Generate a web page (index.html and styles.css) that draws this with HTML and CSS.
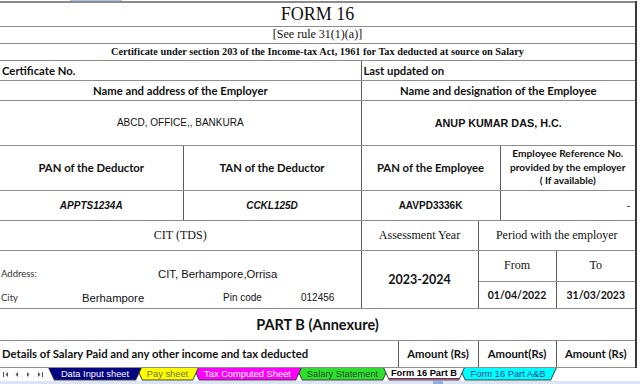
FILE: index.html
```html
<!DOCTYPE html>
<html lang="en">
<head>
    <meta charset="utf-8">
    <meta name="viewport" content="width=device-width, initial-scale=1">
    <link rel="stylesheet" href="styles.css">
</head>
<body>
    <!-- selection marker above the sheet -->
    <div class="sheet-top"><span class="sel"></span></div>

    <table class="form16">
        <colgroup>
            <col class="c1"><col class="c2"><col class="c3"><col class="c4"><col class="c5"><col class="c6"><col class="c7">
        </colgroup>
        <tr class="r-title"><td colspan="7" class="title">FORM 16</td></tr>
        <tr class="r-17"><td colspan="7" class="rule">[See rule 31(1)(a)]</td></tr>
        <tr class="r-17"><td colspan="7" class="cert">Certificate under section 203 of the Income-tax Act, 1961 for Tax deducted at source on Salary</td></tr>
        <tr class="r-20">
            <td colspan="2" class="hd left">Certificate No.</td>
            <td colspan="5" class="hd left">Last updated on</td>
        </tr>
        <tr class="r-20">
            <td colspan="2" class="hd">Name and address of the Employer</td>
            <td colspan="5" class="hd">Name and designation of the Employee</td>
        </tr>
        <tr class="r-45">
            <td colspan="2" class="val">ABCD, OFFICE,, BANKURA</td>
            <td colspan="5" class="val bold name">ANUP KUMAR DAS, H.C.</td>
        </tr>
        <tr class="r-45">
            <td class="hd">PAN of the Deductor</td>
            <td class="hd">TAN of the Deductor</td>
            <td colspan="3" class="hd">PAN of the Employee</td>
            <td colspan="2" class="hd small">Employee Reference No.<br>provided by the employer<br>( If available)</td>
        </tr>
        <tr class="r-30">
            <td class="val bi">APPTS1234A</td>
            <td class="val bi">CCKL125D</td>
            <td colspan="3" class="val bold">AAVPD3336K</td>
            <td colspan="2" class="val right">-</td>
        </tr>
        <tr class="r-30">
            <td colspan="2" class="serif">CIT (TDS)</td>
            <td colspan="2" class="serif">Assessment Year</td>
            <td colspan="3" class="serif">Period with the employer</td>
        </tr>
        <tr class="r-31">
            <td colspan="2" rowspan="2" class="addr">
                <div class="addr-grid">
                    <span class="lbl">Address:</span>
                    <span class="val cit">CIT, Berhampore,Orrisa</span>
                    <span class="lbl">City</span>
                    <span class="val town">Berhampore</span>
                    <span class="val">Pin code</span>
                    <span class="val">012456</span>
                </div>
            </td>
            <td colspan="2" rowspan="2" class="hd year">2023-2024</td>
            <td colspan="2" class="serif">From</td>
            <td class="serif">To</td>
        </tr>
        <tr class="r-27">
            <td colspan="2" class="hd date">01/04/2022</td>
            <td class="hd date">31/03/2023</td>
        </tr>
        <tr class="r-32"><td colspan="7" class="hd part">PART B (Annexure)</td></tr>
        <tr class="r-27">
            <td colspan="3" class="hd left">Details of Salary Paid and any other income and tax deducted</td>
            <td class="hd">Amount (Rs)</td>
            <td colspan="2" class="hd">Amount(Rs)</td>
            <td class="hd">Amount (Rs)</td>
        </tr>
    </table>

    <!-- sheet tabs -->
    <div class="tabbar">
        <svg class="nav" width="46" height="13" viewBox="0 0 46 13">
            <rect x="3" y="4" width="1" height="5" fill="#555"/>
            <polygon points="8,4 8,9 5.5,6.5" fill="#555"/>
            <polygon points="18,4 18,9 15.5,6.5" fill="#555"/>
            <polygon points="27,4 27,9 29.5,6.5" fill="#555"/>
            <polygon points="38,4 38,9 40.5,6.5" fill="#555"/>
            <rect x="42" y="4" width="1" height="5" fill="#555"/>
        </svg>
        <div class="tabs">
            <span class="tab t-data"><span>Data Input sheet</span></span>
            <span class="tab t-pay"><span>Pay sheet</span></span>
            <span class="tab t-tax"><span>Tax Computed Sheet</span></span>
            <span class="tab t-sal"><span>Salary Statement</span></span>
            <span class="tab t-partb active"><span>Form 16 Part B</span></span>
            <span class="tab t-ab"><span>Form 16 Part A&amp;B</span></span>
        </div>
    </div>
    <div class="hscroll"><span class="thumb"></span></div>
</body>
</html>
```

FILE: styles.css
```css
body {
    margin: 0;
    width: 640px;
    height: 384px;
    overflow: hidden;
    background: #fff;
    color: #111;
    font-family: Lato, "Liberation Sans", sans-serif;
}

.sheet-top {
    height: 1px;
    display: flex;
}
    .sheet-top .sel {
        margin-left: 70px;
        width: 52px;
        height: 1px;
        background: #a9c1ef;
    }

/* the form sheet */
.form16 {
    width: 636px;
    border-collapse: collapse;
    table-layout: fixed;
    border-top: 2px solid #8c8c8c;
    border-left: hidden;
    border-right: 2px solid #3a3a3a;
}

.c1 {width: 183px;}
.c2 {width: 178px;}
.c3 {width: 37px;}
.c4 {width: 80px;}
.c5 {width: 22px;}
.c6 {width: 56px;}
.c7 {width: 80px;}

.form16 td {
    border-top: 1px solid #8e8e8e;
    border-bottom: 1px solid #8e8e8e;
    border-left: 1px solid #5c5c5c;
    border-right: 1px solid #5c5c5c;
    padding: 0 2px;
    text-align: center;
    vertical-align: middle;
    white-space: nowrap;
    overflow: hidden;
}

.r-title {height: 24px;}
.r-17 {height: 17px;}
.r-20 {height: 20px;}
.r-45 {height: 45px;}
.r-30 {height: 30px;}
.r-31 {height: 31px;}
.r-27 {height: 27px;}
.r-32 {height: 32px;}

.title {font: 18px "Liberation Serif", serif;}
.rule {font: 12px "Liberation Serif", serif;}
.cert {font: bold 10.3px "Liberation Serif", serif;}
.serif {font: 12px "Liberation Serif", serif;}

.hd {font: bold 11.3px Lato, sans-serif;}
.form16 td.left {text-align: left; padding-left: 2px;}
.form16 td.right {text-align: right; padding-right: 5px;}
.small {font-size: 10.2px; line-height: 13.5px;}
.year {font-size: 12.5px;}
.date {font-size: 10.5px;}
.part {font-size: 14.5px;}

.val {font: 10px "Liberation Sans", Arial, sans-serif;}
.bold {font-weight: bold;}
.name {font-size: 10.8px;}
.bi {font-weight: bold; font-style: italic;}

/* address block of CIT (TDS) */
.form16 td.addr {
    vertical-align: top;
    text-align: left;
    padding: 15px 0 0 1px;
}
.addr-grid {
    display: grid;
    grid-template-columns: 81px 76px 65px 78px 1fr;
    grid-template-rows: 16px 16px;
    row-gap: 8px;
    align-items: center;
}
.lbl {font: 9.5px Lato, sans-serif; color: #333;}
.cit {grid-column: 3 / span 3; font-size: 11.3px;}
.town {grid-column: 2 / span 2; font-size: 11.3px;}

/* sheet tabs */
.tabbar {
    height: 13px;
    display: flex;
    align-items: flex-start;
}
.nav {display: block; flex: none; margin-right: 2px;}

.tabs {display: flex;}

.tab {
    position: relative;
    display: block;
    height: 13px;
    margin-right: -6px;
    background: #3a3a3a;
    clip-path: polygon(0 0, 100% 0, calc(100% - 6px) 100%, 6px 100%);
    font: 9.3px "Liberation Sans", Tahoma, sans-serif;
}
    .tab > span {
        display: flex;
        align-items: center;
        justify-content: center;
        height: 12px;
        margin: 0 1px;
        clip-path: polygon(0 0, 100% 0, calc(100% - 5.5px) 100%, 5.5px 100%);
    }

.t-data {width: 94px; z-index: 6;}
.t-data > span {background: #000080; color: #fff;}
.t-pay {width: 63px; z-index: 5;}
.t-pay > span {background: #ffff00; color: #6e6e52;}
.t-tax {width: 109px; z-index: 4;}
.t-tax > span {background: #ff00ff; color: #fff;}
.t-sal {width: 93px; z-index: 3;}
.t-sal > span {background: #2ee02e; color: #2d4a2d;}
.t-partb {width: 82px; z-index: 10;}
.t-partb > span {background: #fff; color: #000; font-weight: bold; border-bottom: 2px solid #7b2f55; height: 10px;}
.t-ab {width: 98px; z-index: 1;}
.t-ab > span {background: #00ffff; color: #1f3f8f;}

.hscroll {
    height: 4px;
    background: #dbe5f4;
    display: flex;
}
    .hscroll .thumb {
        margin-left: 433px;
        width: 10px;
        background: #8fb0e6;
    }
```
